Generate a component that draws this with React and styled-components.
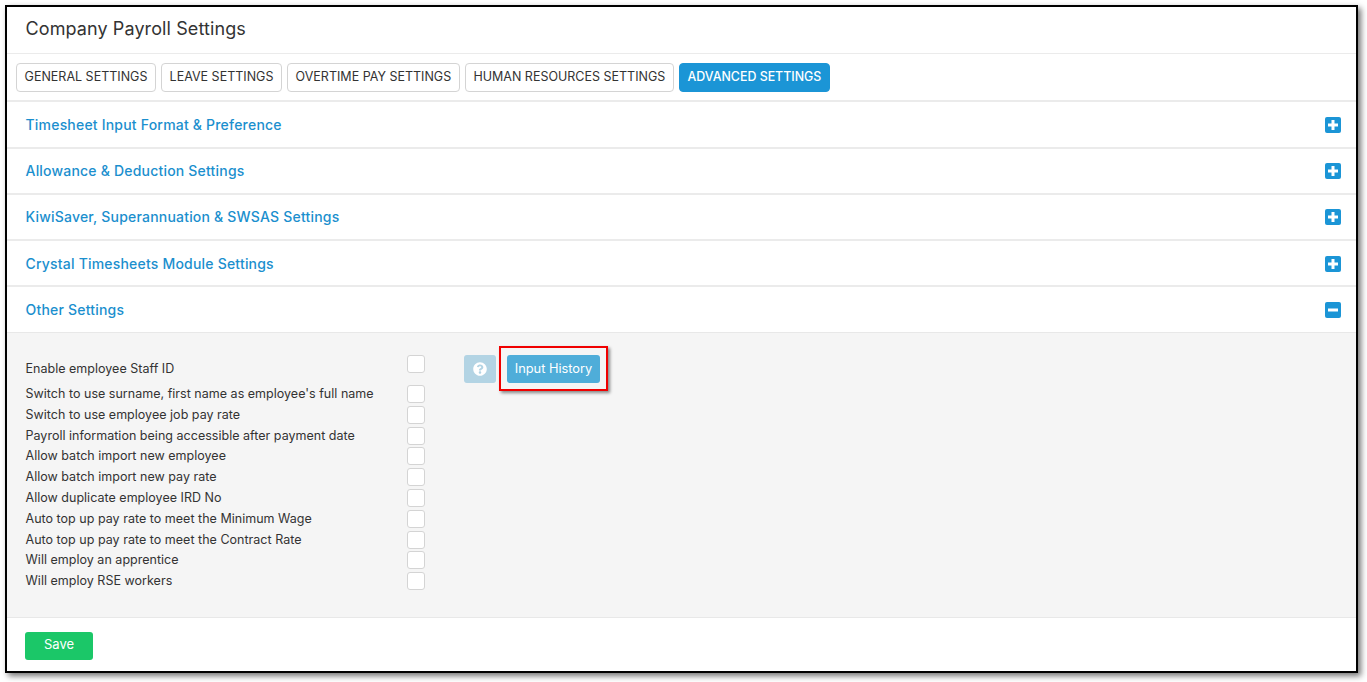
import React from "react";
import styled, { createGlobalStyle } from "styled-components";
import { FaQuestionCircle } from "react-icons/fa";

const Global = createGlobalStyle`
  html, body { margin: 0; padding: 0; background: #fff; }
  body { font-family: Inter, "Liberation Sans", sans-serif; height: 682px; overflow: hidden; }
  * { box-sizing: border-box; }
`;
const Page = styled.div`
  padding: 5px 0 0 5px;
  width: 1367px;
  height: 682px;
`;
const Frame = styled.div`
  width: 1353px;
  height: 668px;
  border: 2px solid #000;
  background: #fff;
  box-shadow: 3px 3px 6px rgba(0, 0, 0, 0.55);
  display: flex;
  flex-direction: column;
`;
const Header = styled.div`
  height: 47px;
  flex: none;
  border-bottom: 1px solid #ebebeb;
  padding: 0 18.5px 3px;
  display: flex;
  align-items: center;
  font-size: 18px;
  letter-spacing: 0.1px;
  color: #333;
`;
const Tabs = styled.div`
  height: 48.45px;
  flex: none;
  border-bottom: 2px solid #ebebeb;
  padding: 9px 9px 0;
  display: flex;
  gap: 5px;
`;
const Tab = styled.div`
  height: 29px;
  padding: 0 7.6px 3px;
  display: flex;
  align-items: center;
  font-size: ${p => (p.$active ? 12.4 : 12.5)}px;
  font-weight: ${p => (p.$active ? 500 : 400)};
  border-radius: 4px;
  border: 1px solid ${p => (p.$active ? "#1b95d6" : "#d4d4d4")};
  background: ${p => (p.$active ? "#1b95d6" : "#fff")};
  color: ${p => (p.$active ? "#fff" : "#333")};
`;
const Row = styled.div`
  height: 46.2px;
  flex: none;
  border-bottom: ${p => (p.$open ? 1 : 2)}px solid ${p => (p.$open ? "#e8e8e8" : "#ebebeb")};
  padding: 0 15px 0 18.5px;
  display: flex;
  align-items: center;
  justify-content: space-between;
  font-size: 14px;
  font-weight: 500;
  letter-spacing: 0.2px;
  color: #1b8fce;
`;
const ToggleIcon = styled.svg`
  width: 16px;
  height: 16px;
  display: block;
  margin-top: 1px;
`;
const Body = styled.div`
  height: 284.55px;
  flex: none;
  background: #f5f5f5;
  border-bottom: 1px solid #e8e8e8;
  padding: 22px 18px 0;
  display: flex;
`;
const List = styled.div`
  width: 400px;
  flex: none;
  display: flex;
  flex-direction: column;
`;
const SettingRow = styled.div`
  height: ${p => (p.$first ? 28.55 : 20.8)}px;
  display: flex;
  align-items: ${p => (p.$first ? "flex-start" : "center")};
  justify-content: space-between;
  font-size: 12.5px;
  letter-spacing: 0.02px;
  color: #333;
`;
const SettingLabel = styled.span`
  margin: ${p => (p.$first ? 6 : 0)}px 0 0 0.5px;
  padding-bottom: 1.6px;
  white-space: nowrap;
`;
const Check = styled.span`
  width: 18px;
  height: 18px;
  margin-bottom: 0.6px;
  background: #fff;
  border: 1px solid #d4d4d4;
  border-radius: 3px;
  display: block;
`;
const Actions = styled.div`
  margin-left: 39px;
  display: flex;
  gap: 11px;
  height: 28px;
`;
const HelpButton = styled.div`
  width: 32px;
  height: 28px;
  padding-bottom: 1px;
  background: #b3d4e4;
  border-radius: 3px;
  color: #fff;
  font-size: 14px;
  display: flex;
  align-items: center;
  justify-content: center;
`;
const Highlight = styled.div`
  position: relative;
  height: 28px;
  &::after {
    content: "";
    position: absolute;
    inset: -9px -8px -8px -8px;
    border: 2px solid #f00000;
    box-shadow: 2px 2px 3px rgba(0, 0, 0, 0.45);
    pointer-events: none;
  }
`;
const HistoryButton = styled.div`
  width: 93px;
  height: 28px;
  padding-bottom: 1px;
  background: #4fadd9;
  border-radius: 3px;
  color: #fff;
  font-size: 12.8px;
  display: flex;
  align-items: center;
  justify-content: center;
`;
const Footer = styled.div`
  flex: 1;
  padding: 14px 18px 0;
`;
const SaveButton = styled.div`
  width: 68px;
  height: 28px;
  padding-bottom: 3px;
  background: #1bc768;
  border-radius: 3px;
  color: #fff;
  font-size: 13px;
  display: flex;
  align-items: center;
  justify-content: center;
`;

const tabs = ["GENERAL SETTINGS", "LEAVE SETTINGS", "OVERTIME PAY SETTINGS", "HUMAN RESOURCES SETTINGS", "ADVANCED SETTINGS"];
const sections = ["Timesheet Input Format & Preference", "Allowance & Deduction Settings", "KiwiSaver, Superannuation & SWSAS Settings", "Crystal Timesheets Module Settings"];
const settings = [
  "Enable employee Staff ID",
  "Switch to use surname, first name as employee's full name",
  "Switch to use employee job pay rate",
  "Payroll information being accessible after payment date",
  "Allow batch import new employee",
  "Allow batch import new pay rate",
  "Allow duplicate employee IRD No",
  "Auto top up pay rate to meet the Minimum Wage",
  "Auto top up pay rate to meet the Contract Rate",
  "Will employ an apprentice",
  "Will employ RSE workers",
];

const Toggle = ({ open }) => (
  <ToggleIcon viewBox="0 0 16 16">
    <rect width="16" height="16" rx="2" fill="#1b95d6" />
    {open ? (
      <rect x="3" y="6.5" width="10" height="3" fill="#fff" />
    ) : (
      <path d="M6.5 3h3v3.5H13v3H9.5V13h-3V9.5H3v-3h3.5z" fill="#fff" />
    )}
  </ToggleIcon>
);

export default function App() {
  return (
    <Page>
      <Global />
      <Frame>
        <Header>Company Payroll Settings</Header>
        <Tabs>
          {tabs.map((t, i) => (
            <Tab key={t} $active={i === 4}>{t}</Tab>
          ))}
        </Tabs>
        {sections.map(s => (
          <Row key={s}>
            {s}
            <Toggle />
          </Row>
        ))}
        <Row $open>
          Other Settings
          <Toggle open />
        </Row>
        <Body>
          <List>
            {settings.map((s, i) => (
              <SettingRow key={s} $first={i === 0}>
                <SettingLabel $first={i === 0}>{s}</SettingLabel>
                <Check />
              </SettingRow>
            ))}
          </List>
          <Actions>
            <HelpButton>
              <FaQuestionCircle />
            </HelpButton>
            <Highlight>
              <HistoryButton>Input History</HistoryButton>
            </Highlight>
          </Actions>
        </Body>
        <Footer>
          <SaveButton>Save</SaveButton>
        </Footer>
      </Frame>
    </Page>
  );
}
